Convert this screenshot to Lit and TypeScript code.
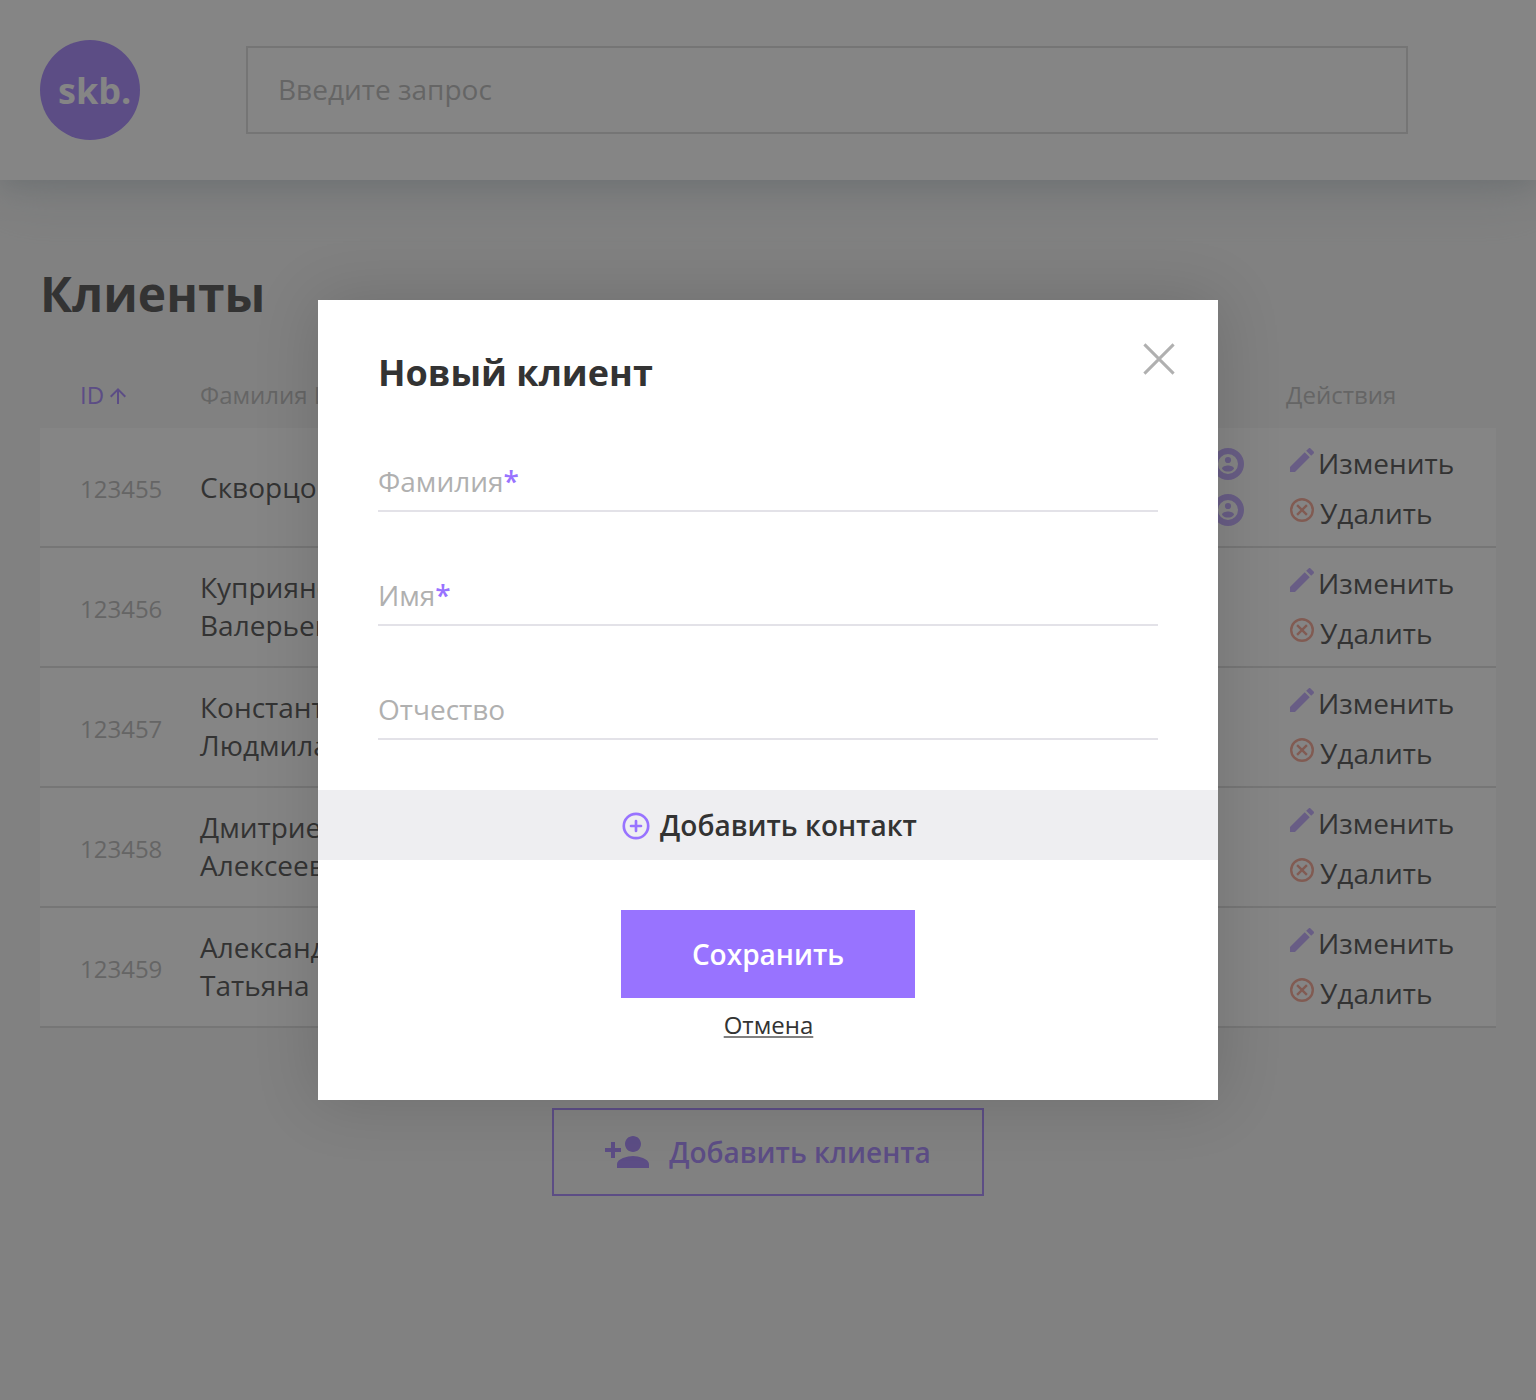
import { LitElement, html, svg, css } from "lit";
import { customElement } from "lit/decorators.js";

interface Client {
  id: string;
  name: string[];
  contacts: number;
}

interface Field {
  label: string;
  required: boolean;
}

const CLIENTS: Client[] = [
  { id: "123455", name: ["Скворцов Д."], contacts: 2 },
  { id: "123456", name: ["Куприянов", "Валерьевич"], contacts: 0 },
  { id: "123457", name: ["Константин", "Людмила"], contacts: 0 },
  { id: "123458", name: ["Дмитриев", "Алексеевич"], contacts: 0 },
  { id: "123459", name: ["Александр", "Татьяна"], contacts: 0 },
];

const FIELDS: Field[] = [
  { label: "Фамилия", required: true },
  { label: "Имя", required: true },
  { label: "Отчество", required: false },
];

const arrowUp = svg`<svg width="16" height="16" viewBox="4 4 16 16"><path fill="currentColor" d="M4 12l1.41 1.41L11 7.83V20h2V7.83l5.58 5.59L20 12l-8-8-8 8z"/></svg>`;

const pencil = svg`<svg class="pencil" width="24" height="24" viewBox="3 3 18 18"><path fill="#9873ff" d="M3 17.25V21h3.75L17.81 9.94l-3.75-3.75L3 17.25zM20.71 7.04c.39-.39.39-1.02 0-1.41l-2.34-2.34c-.39-.39-1.02-.39-1.41 0l-1.83 1.83 3.75 3.75 1.83-1.83z"/></svg>`;

const remove = svg`<svg class="remove" width="24" height="24" viewBox="0 0 24 24"><g fill="none" stroke="#f06a4d" stroke-width="2.4"><circle cx="12" cy="12" r="10.8"/><path d="M7.1 7.1L16.9 16.9M16.9 7.1L7.1 16.9"/></g></svg>`;

const contact = svg`<svg class="contact" width="32" height="32" viewBox="0 0 32 32"><path fill="#9873ff" fill-rule="evenodd" d="M16 0a16 16 0 1 0 0 32 16 16 0 0 0 0-32zM16 6a10 10 0 1 1 0 20 10 10 0 0 1 0-20z"/><circle cx="16" cy="12" r="3.1" fill="#9873ff"/><path fill="#9873ff" d="M16 17.6c-2.4 0-6 1.1-6 3.1 1.3 2 3.5 2.9 6 2.9s4.7-.9 6-2.9c0-2-3.6-3.1-6-3.1z"/></svg>`;

const personAdd = svg`<svg width="44" height="32" viewBox="1 4 22 16"><path fill="currentColor" d="M15 12c2.21 0 4-1.79 4-4s-1.79-4-4-4-4 1.79-4 4 1.79 4 4 4zm-9-2V7H4v3H1v2h3v3h2v-3h3v-2H6zm9 4c-2.67 0-8 1.34-8 4v2h16v-2c0-2.66-5.33-4-8-4z"/></svg>`;

const plusCircle = svg`<svg width="28" height="28" viewBox="0 0 28 28"><g fill="none" stroke="#9873ff" stroke-width="2.67"><circle cx="14" cy="14" r="12.2"/><path stroke-linecap="round" d="M14 9v10M9 14h10"/></g></svg>`;

const cross = svg`<svg width="32" height="32" viewBox="0 0 32 32"><path fill="none" stroke="#b0b0b0" stroke-width="3" d="M1.4 1.4L30.6 30.6M30.6 1.4L1.4 30.6"/></svg>`;

@customElement("new-client-dialog")
export class NewClientDialog extends LitElement {
  static styles = css`
    :host {
      display: flex;
      flex-direction: column;
      box-sizing: border-box;
      width: 900px;
      height: 800px;
      background: #fff;
      box-shadow: 0 0 60px rgba(0, 0, 0, 0.15);
      color: #333;
    }
    .head {
      display: flex;
      justify-content: space-between;
      align-items: flex-start;
      padding: 43px 43px 0 60px;
    }
    .title {
      margin: 5px 0 0;
      font-size: 36px;
      line-height: 50px;
      font-weight: 700;
    }
    .close {
      display: flex;
    }
    .fields {
      display: flex;
      flex-direction: column;
      gap: 64px;
      padding: 64px 60px 0;
    }
    .field {
      height: 48px;
      border-bottom: 2px solid #e3e2e8;
      font-size: 28px;
      line-height: 38px;
      color: #b0b0b0;
    }
    .star {
      color: #9873ff;
      font-weight: 600;
    }
    .add {
      display: flex;
      align-items: center;
      justify-content: center;
      gap: 10px;
      height: 70px;
      margin-top: 50px;
      padding-left: 3px;
      background: #eeeef1;
      font-size: 28px;
      line-height: 38px;
      font-weight: 600;
    }
    .add svg {
      margin-top: 2px;
    }
    .save {
      display: flex;
      align-items: center;
      align-self: center;
      justify-content: center;
      width: 294px;
      height: 88px;
      margin-top: 50px;
      background: #9873ff;
      color: #fff;
      font-size: 28px;
      line-height: 38px;
      font-weight: 600;
    }
    .cancel {
      align-self: center;
      margin-top: 10px;
      padding-left: 1px;
      font-size: 24px;
      line-height: 34px;
    }
    .cancel span {
      text-decoration: underline;
      text-decoration-color: #808080;
      text-decoration-thickness: 2px;
      text-underline-offset: 2px;
      text-decoration-skip-ink: none;
    }
  `;

  render() {
    return html`
      <div class="head">
        <h2 class="title">Новый клиент</h2>
        <div class="close">${cross}</div>
      </div>
      <div class="fields">
        ${FIELDS.map(
          (f) => html`<div class="field">${f.label}${f.required ? html`<span class="star">*</span>` : ""}</div>`,
        )}
      </div>
      <div class="add">${plusCircle}<span>Добавить контакт</span></div>
      <div class="save">Сохранить</div>
      <div class="cancel"><span>Отмена</span></div>
    `;
  }
}

@customElement("app-root")
export class AppRoot extends LitElement {
  static styles = css`
    :host {
      display: block;
      font-family: "Open Sans", "Noto Sans", sans-serif;
    }
    .page {
      position: relative;
      display: flex;
      flex-direction: column;
      box-sizing: border-box;
      height: 1400px;
      overflow: hidden;
      background: #f5f5f5;
      color: #333;
    }
    .header {
      display: flex;
      align-items: center;
      gap: 106px;
      height: 180px;
      padding: 0 128px 0 40px;
      box-sizing: border-box;
      background: #fff;
      box-shadow:
        0 18px 54px rgba(176, 190, 197, 0.32),
        0 5px 24px rgba(176, 190, 197, 0.6);
    }
    .logo {
      display: flex;
      flex: none;
      align-items: center;
      box-sizing: border-box;
      width: 100px;
      height: 100px;
      padding: 2px 0 0 18px;
      border-radius: 50%;
      background: #9873ff;
      color: #fff;
      font-size: 36px;
      line-height: 50px;
      font-weight: 700;
    }
    .search {
      display: flex;
      flex: 1;
      align-items: center;
      box-sizing: border-box;
      height: 88px;
      padding: 0 0 2px 30px;
      border: 2px solid #d6d6d6;
      font-size: 28px;
      line-height: 38px;
      color: #b0b0b0;
    }
    .main {
      display: flex;
      flex-direction: column;
      padding: 80px 40px 0;
    }
    .heading {
      margin: 0;
      font-size: 48px;
      line-height: 68px;
      font-weight: 700;
    }
    .row {
      display: grid;
      grid-template-columns: 120px 840px 246px 1fr;
      padding-left: 40px;
    }
    .labels {
      padding-top: 50px;
      height: 50px;
      font-size: 24px;
      line-height: 34px;
      color: #b0b0b0;
    }
    .sort {
      display: flex;
      align-items: center;
      gap: 6px;
      height: 34px;
      color: #9873ff;
    }
    .sort svg {
      margin-top: 2px;
    }
    .client {
      box-sizing: border-box;
      height: 120px;
      align-items: center;
      background: #fff;
      border-bottom: 2px solid #d9d9d9;
    }
    .id {
      padding-top: 3px;
      font-size: 24px;
      line-height: 34px;
      color: #b0b0b0;
    }
    .name {
      font-size: 28px;
      line-height: 38px;
      white-space: nowrap;
    }
    .name.double {
      padding-bottom: 2px;
    }
    .contacts {
      display: flex;
      flex-direction: column;
      align-items: flex-end;
      gap: 14px;
      padding-right: 42px;
    }
    .contact,
    .pencil,
    .remove {
      display: block;
      opacity: 0.7;
    }
    .actions {
      display: flex;
      flex-direction: column;
      gap: 12px;
      padding: 2px 0 0 4px;
      font-size: 28px;
      line-height: 38px;
    }
    .action {
      display: flex;
      gap: 4px;
    }
    .action.del {
      gap: 6px;
    }
    .action svg {
      margin-top: 4px;
    }
    .create {
      display: flex;
      align-items: center;
      align-self: center;
      justify-content: center;
      gap: 20px;
      box-sizing: border-box;
      width: 432px;
      height: 88px;
      margin-top: 80px;
      border: 2px solid #9873ff;
      color: #9873ff;
      font-size: 28px;
      line-height: 38px;
      font-weight: 600;
    }
    .overlay {
      position: absolute;
      inset: 0;
      display: flex;
      align-items: center;
      justify-content: center;
      background: rgba(51, 51, 51, 0.6);
    }
  `;

  private renderClient(c: Client) {
    return html`
      <div class="row client">
        <div class="id">${c.id}</div>
        <div class="name ${c.name.length > 1 ? "double" : ""}">${c.name.map((line) => html`<div>${line}</div>`)}</div>
        <div class="contacts">${Array.from({ length: c.contacts }, () => contact)}</div>
        <div class="actions">
          <div class="action">${pencil}<span>Изменить</span></div>
          <div class="action del">${remove}<span>Удалить</span></div>
        </div>
      </div>
    `;
  }

  render() {
    return html`
      <div class="page">
        <header class="header">
          <div class="logo">skb.</div>
          <div class="search">Введите запрос</div>
        </header>
        <main class="main">
          <h1 class="heading">Клиенты</h1>
          <div class="row labels">
            <div class="sort"><span>ID</span>${arrowUp}</div>
            <div>Фамилия Имя</div>
            <div></div>
            <div>Действия</div>
          </div>
          ${CLIENTS.map((c) => this.renderClient(c))}
          <div class="create">${personAdd}<span>Добавить клиента</span></div>
        </main>
        <div class="overlay"><new-client-dialog></new-client-dialog></div>
      </div>
    `;
  }
}
